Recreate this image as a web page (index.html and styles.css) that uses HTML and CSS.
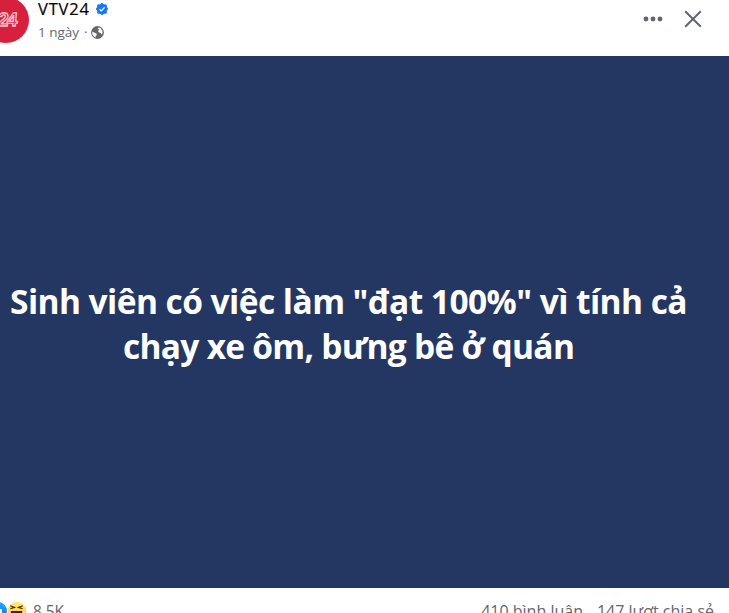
FILE: index.html
```html
<!DOCTYPE html>
<html lang="vi">
<head>
<meta charset="utf-8">
<title>VTV24</title>
<link rel="stylesheet" href="styles.css">
</head>
<body>
<article class="post">
  <header class="header">
    <div class="avatar"><span class="avatar-text">24</span></div>
    <div class="meta">
      <div class="name-row">
        <span class="name">VTV24</span>
        <svg class="verified" viewBox="0 0 12 12"><g fill="#1877f2"><circle cx="6" cy="6" r="5.2"/><circle cx="6" cy="1.4" r="1.4"/><circle cx="6" cy="10.6" r="1.4"/><circle cx="1.4" cy="6" r="1.4"/><circle cx="10.6" cy="6" r="1.4"/><circle cx="2.6" cy="2.7" r="1.5"/><circle cx="9.4" cy="2.7" r="1.5"/><circle cx="2.6" cy="9.3" r="1.5"/><circle cx="9.4" cy="9.3" r="1.5"/></g><path d="M3.5 6.2 5.3 7.9 8.6 4.4" fill="none" stroke="#fff" stroke-width="1.3"/></svg>
      </div>
      <div class="time-row">
        <span class="time">1 ngày</span><span class="dot">·</span>
        <svg class="globe" viewBox="0 0 13 13"><circle cx="6.5" cy="6.5" r="6.4" fill="#65676b"/><path d="M7.2 1.5 9.4 2 11.3 4.4 11.6 7 10.6 8.6 9.6 6.9 7.6 6.3 7.1 4.9 8.4 3.8 7 2.9ZM1.3 5.4 3 6.6 5.4 7.4 5.9 8.9 4.8 10 4.6 11.4 2.6 10.2 1.3 8Z" fill="#fff"/></svg>
      </div>
    </div>
    <div class="actions">
      <svg class="more" viewBox="0 0 20 6" fill="#606770"><circle cx="3" cy="3" r="2.45"/><circle cx="10" cy="3" r="2.45"/><circle cx="17" cy="3" r="2.45"/></svg>
      <svg class="close" viewBox="0 0 18 18"><path d="M1.2 1.2 16.8 16.8M16.8 1.2 1.2 16.8" fill="none" stroke="#606770" stroke-width="2"/></svg>
    </div>
  </header>
  <div class="banner">
    <p class="headline"><span class="line first">Sinh viên có việc làm "đạt 100%" vì tính cả</span><span class="line second">chạy xe ôm, bưng bê ở quán</span></p>
  </div>
  <footer class="footer">
    <svg class="reactions" viewBox="0 0 27 20"><defs><linearGradient id="blue" x2="0" y2="1"><stop stop-color="#18afff"/><stop offset="1" stop-color="#0866ff"/></linearGradient><linearGradient id="yellow" x2="0" y2="1"><stop stop-color="#ffec70"/><stop offset="1" stop-color="#ffc447"/></linearGradient></defs><circle cx="-2" cy="10" r="9" fill="url(#blue)"/><path d="M-4 8H2V13H-4Z" fill="#fff"/><circle cx="17" cy="10" r="10.2" fill="#fff"/><circle cx="17" cy="10" r="9.3" fill="url(#yellow)"/><path d="M10.2 4.7 14.5 6.4 10.4 7.8M22.8 4.7 18.5 6.4 22.6 7.8" fill="none" stroke="#4b280e" stroke-width="1.2"/><path d="M10.8 10H22.2Q21.7 17.5 16.5 17.5T10.8 10Z" fill="#4b1712"/></svg>
    <span class="count">8,5K</span>
    <span class="stat comments">410 bình luận</span>
    <span class="stat shares">147 lượt chia sẻ</span>
  </footer>
</article>
</body>
</html>
```
FILE: styles.css
```css
* { box-sizing: border-box; }
body {
  margin: 0;
  height: 613px;
  overflow: hidden;
  background: #fff;
  font-family: "Open Sans", "Noto Sans", sans-serif;
  color: #65676b;
}
.post { height: 613px; overflow: hidden; }
.header { display: flex; height: 56px; align-items: flex-start; }
.avatar {
  flex: none;
  width: 46px;
  height: 46px;
  margin: -3px 0 0 -17px;
  border-radius: 50%;
  background: #d6203e;
  display: flex;
  align-items: center;
  padding-left: 15px;
}
.avatar-text {
  font: bold 19px/20px "Liberation Sans", sans-serif;
  letter-spacing: -1.5px;
  color: #d6203e;
  -webkit-text-stroke: 1.3px #f6c5ce;
  transform: skewX(-5deg);
}
.meta { margin-left: 9px; flex: 1; }
.name-row { display: flex; height: 20px; align-items: flex-start; }
.name { font-size: 16.5px; line-height: 18px; font-weight: 500; color: #050505; -webkit-text-stroke: .2px #050505; letter-spacing: .8px; }
.verified { width: 12px; height: 12px; margin: 3px 0 0 6px; }
.time-row { display: flex; height: 24px; align-items: center; font-size: 13.5px; line-height: 24px; }
.dot { margin: 0 3px 0 5px; }
.globe { width: 13px; height: 13px; }
.actions { display: flex; align-items: center; height: 37px; margin-right: 27px; gap: 21px; }
.more { width: 20px; height: 6px; }
.close { width: 18px; height: 18px; }
.banner { height: 532px; background: #243662; padding-top: 223px; }
.headline { margin: 0; color: #fff; font-size: 33.5px; line-height: 45px; font-weight: 700; letter-spacing: -.56px; }
.line { display: block; white-space: nowrap; }
.first { margin-left: 10px; }
.second { margin-left: 123px; letter-spacing: -.72px; }
.footer { display: flex; height: 46px; align-items: center; font-size: 16px; line-height: 22px; white-space: nowrap; }
.reactions { width: 27px; height: 20px; }
.count { margin: 1px 0 0 6px; font-size: 15.4px; }
.comments { margin-left: auto; }
.shares { margin: 0 15px 0 14px; }
```
